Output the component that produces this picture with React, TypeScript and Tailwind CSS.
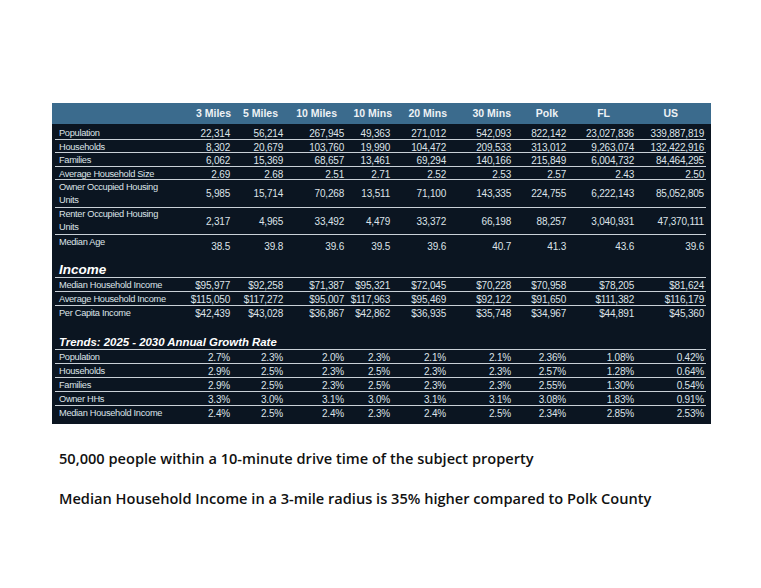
const cols = ['3 Miles', '5 Miles', '10 Miles', '10 Mins', '20 Mins', '30 Mins', 'Polk', 'FL', 'US'];
const headPad = ['pr-[1px]', 'pr-[7px]', 'pr-[9px]', 'pr-0', 'pr-[1px]', 'pr-[2px]', 'pr-[10px]', 'pr-[26px]', 'pr-[28px]'];

const general: string[][] = [
  ['Population', '22,314', '56,214', '267,945', '49,363', '271,012', '542,093', '822,142', '23,027,836', '339,887,819'],
  ['Households', '8,302', '20,679', '103,760', '19,990', '104,472', '209,533', '313,012', '9,263,074', '132,422,916'],
  ['Families', '6,062', '15,369', '68,657', '13,461', '69,294', '140,166', '215,849', '6,004,732', '84,464,295'],
  ['Average Household Size', '2.69', '2.68', '2.51', '2.71', '2.52', '2.53', '2.57', '2.43', '2.50'],
];

const income: string[][] = [
  ['Median Household Income', '$95,977', '$92,258', '$71,387', '$95,321', '$72,045', '$70,228', '$70,958', '$78,205', '$81,624'],
  ['Average Household Income', '$115,050', '$117,272', '$95,007', '$117,963', '$95,469', '$92,122', '$91,650', '$111,382', '$116,179'],
  ['Per Capita Income', '$42,439', '$43,028', '$36,867', '$42,862', '$36,935', '$35,748', '$34,967', '$44,891', '$45,360'],
];

const trends: string[][] = [
  ['Population', '2.7%', '2.3%', '2.0%', '2.3%', '2.1%', '2.1%', '2.36%', '1.08%', '0.42%'],
  ['Households', '2.9%', '2.5%', '2.3%', '2.5%', '2.3%', '2.3%', '2.57%', '1.28%', '0.64%'],
  ['Families', '2.9%', '2.5%', '2.3%', '2.5%', '2.3%', '2.3%', '2.55%', '1.30%', '0.54%'],
  ['Owner HHs', '3.3%', '3.0%', '3.1%', '3.0%', '3.1%', '3.1%', '3.08%', '1.83%', '0.91%'],
  ['Median Household Income', '2.4%', '2.5%', '2.4%', '2.3%', '2.4%', '2.5%', '2.34%', '2.85%', '2.53%'],
];

const grid = 'grid grid-cols-[130px_47px_53px_61px_46px_56px_65px_55px_68px_70px]';

function Row({ cells, label, h = 'h-[14px]', line = true, labelTop = false }: {
  cells: string[];
  label?: React.ReactNode;
  h?: string;
  line?: boolean;
  labelTop?: boolean;
}) {
  return (
    <div className={`${grid} ${h} ${line ? 'border-b border-[#c9d0d7]' : ''}`}>
      <div className={`flex pl-[4px] text-[9.25px] tracking-[-0.3px] leading-[13px] whitespace-nowrap ${labelTop ? 'items-start pt-[1px]' : 'items-center'}`}>
        {label ?? cells[0]}
      </div>
      {cells.slice(1).map((v, i) => (
        <div key={i} className="flex items-center justify-end pr-[2px] text-[10px] tracking-[-0.2px]">
          {v}
        </div>
      ))}
    </div>
  );
}

function Heading({ text, h, size }: { text: string; h: string; size: string }) {
  return (
    <div className={`flex items-end ${h} border-b border-[#c9d0d7] pl-[4px] pb-[1px]`}>
      <span className={`font-bold italic text-white leading-none ${size}`}>{text}</span>
    </div>
  );
}

export default function App() {
  return (
    <div className="w-[761px] h-[588px] bg-white pt-[103px] pl-[52px]" style={{ fontFamily: '"Liberation Sans", Arial, sans-serif' }}>
      <div className="w-[659px] bg-[#0b1521] text-[#dde3e8] pb-[4px]">
        <div className="bg-[#3b6b8d] h-[21px] pl-[3px] pr-[5px]">
          <div className={`${grid} h-full`}>
            <div />
            {cols.map((c, i) => (
              <div key={c} className={`flex items-center justify-end font-bold text-[10.5px] text-[#eef2f5] ${headPad[i]}`}>
                {c}
              </div>
            ))}
          </div>
        </div>

        <div className="pl-[3px] pr-[5px] pt-[2px]">
          {general.map((r, i) => (
            <Row key={r[0]} cells={r} h={i === 1 || i === 3 ? 'h-[13px]' : 'h-[14px]'} />
          ))}
          <Row
            cells={['', '5,985', '15,714', '70,268', '13,511', '71,100', '143,335', '224,755', '6,222,143', '85,052,805']}
            label={<span>Owner Occupied Housing<br />Units</span>}
            h="h-[28px]"
          />
          <Row
            cells={['', '2,317', '4,965', '33,492', '4,479', '33,372', '66,198', '88,257', '3,040,931', '47,370,111']}
            label={<span>Renter Occupied Housing<br />Units</span>}
            h="h-[27px]"
          />
          <Row
            cells={['Median Age', '38.5', '39.8', '39.6', '39.5', '39.6', '40.7', '41.3', '43.6', '39.6']}
            h="h-[22px]"
            line={false}
            labelTop
          />

          <Heading text="Income" h="h-[21px]" size="text-[13.5px]" />
          {income.map((r, i) => (
            <Row key={r[0]} cells={r} line={i < 2} />
          ))}

          <Heading text="Trends: 2025 - 2030 Annual Growth Rate" h="h-[30px]" size="text-[11.4px]" />
          {trends.map((r, i) => (
            <Row key={r[0]} cells={r} line={i < trends.length - 1} />
          ))}
        </div>
      </div>

      <div className="pl-[7px] pt-[24px] text-[#111111] font-semibold text-[14.6px] leading-[20px]" style={{ fontFamily: '"Open Sans", Lato, sans-serif' }}>
        <p>50,000 people within a 10-minute drive time of the subject property</p>
        <p className="mt-[20px]">Median Household Income in a 3-mile radius is 35% higher compared to Polk County</p>
      </div>
    </div>
  );
}
